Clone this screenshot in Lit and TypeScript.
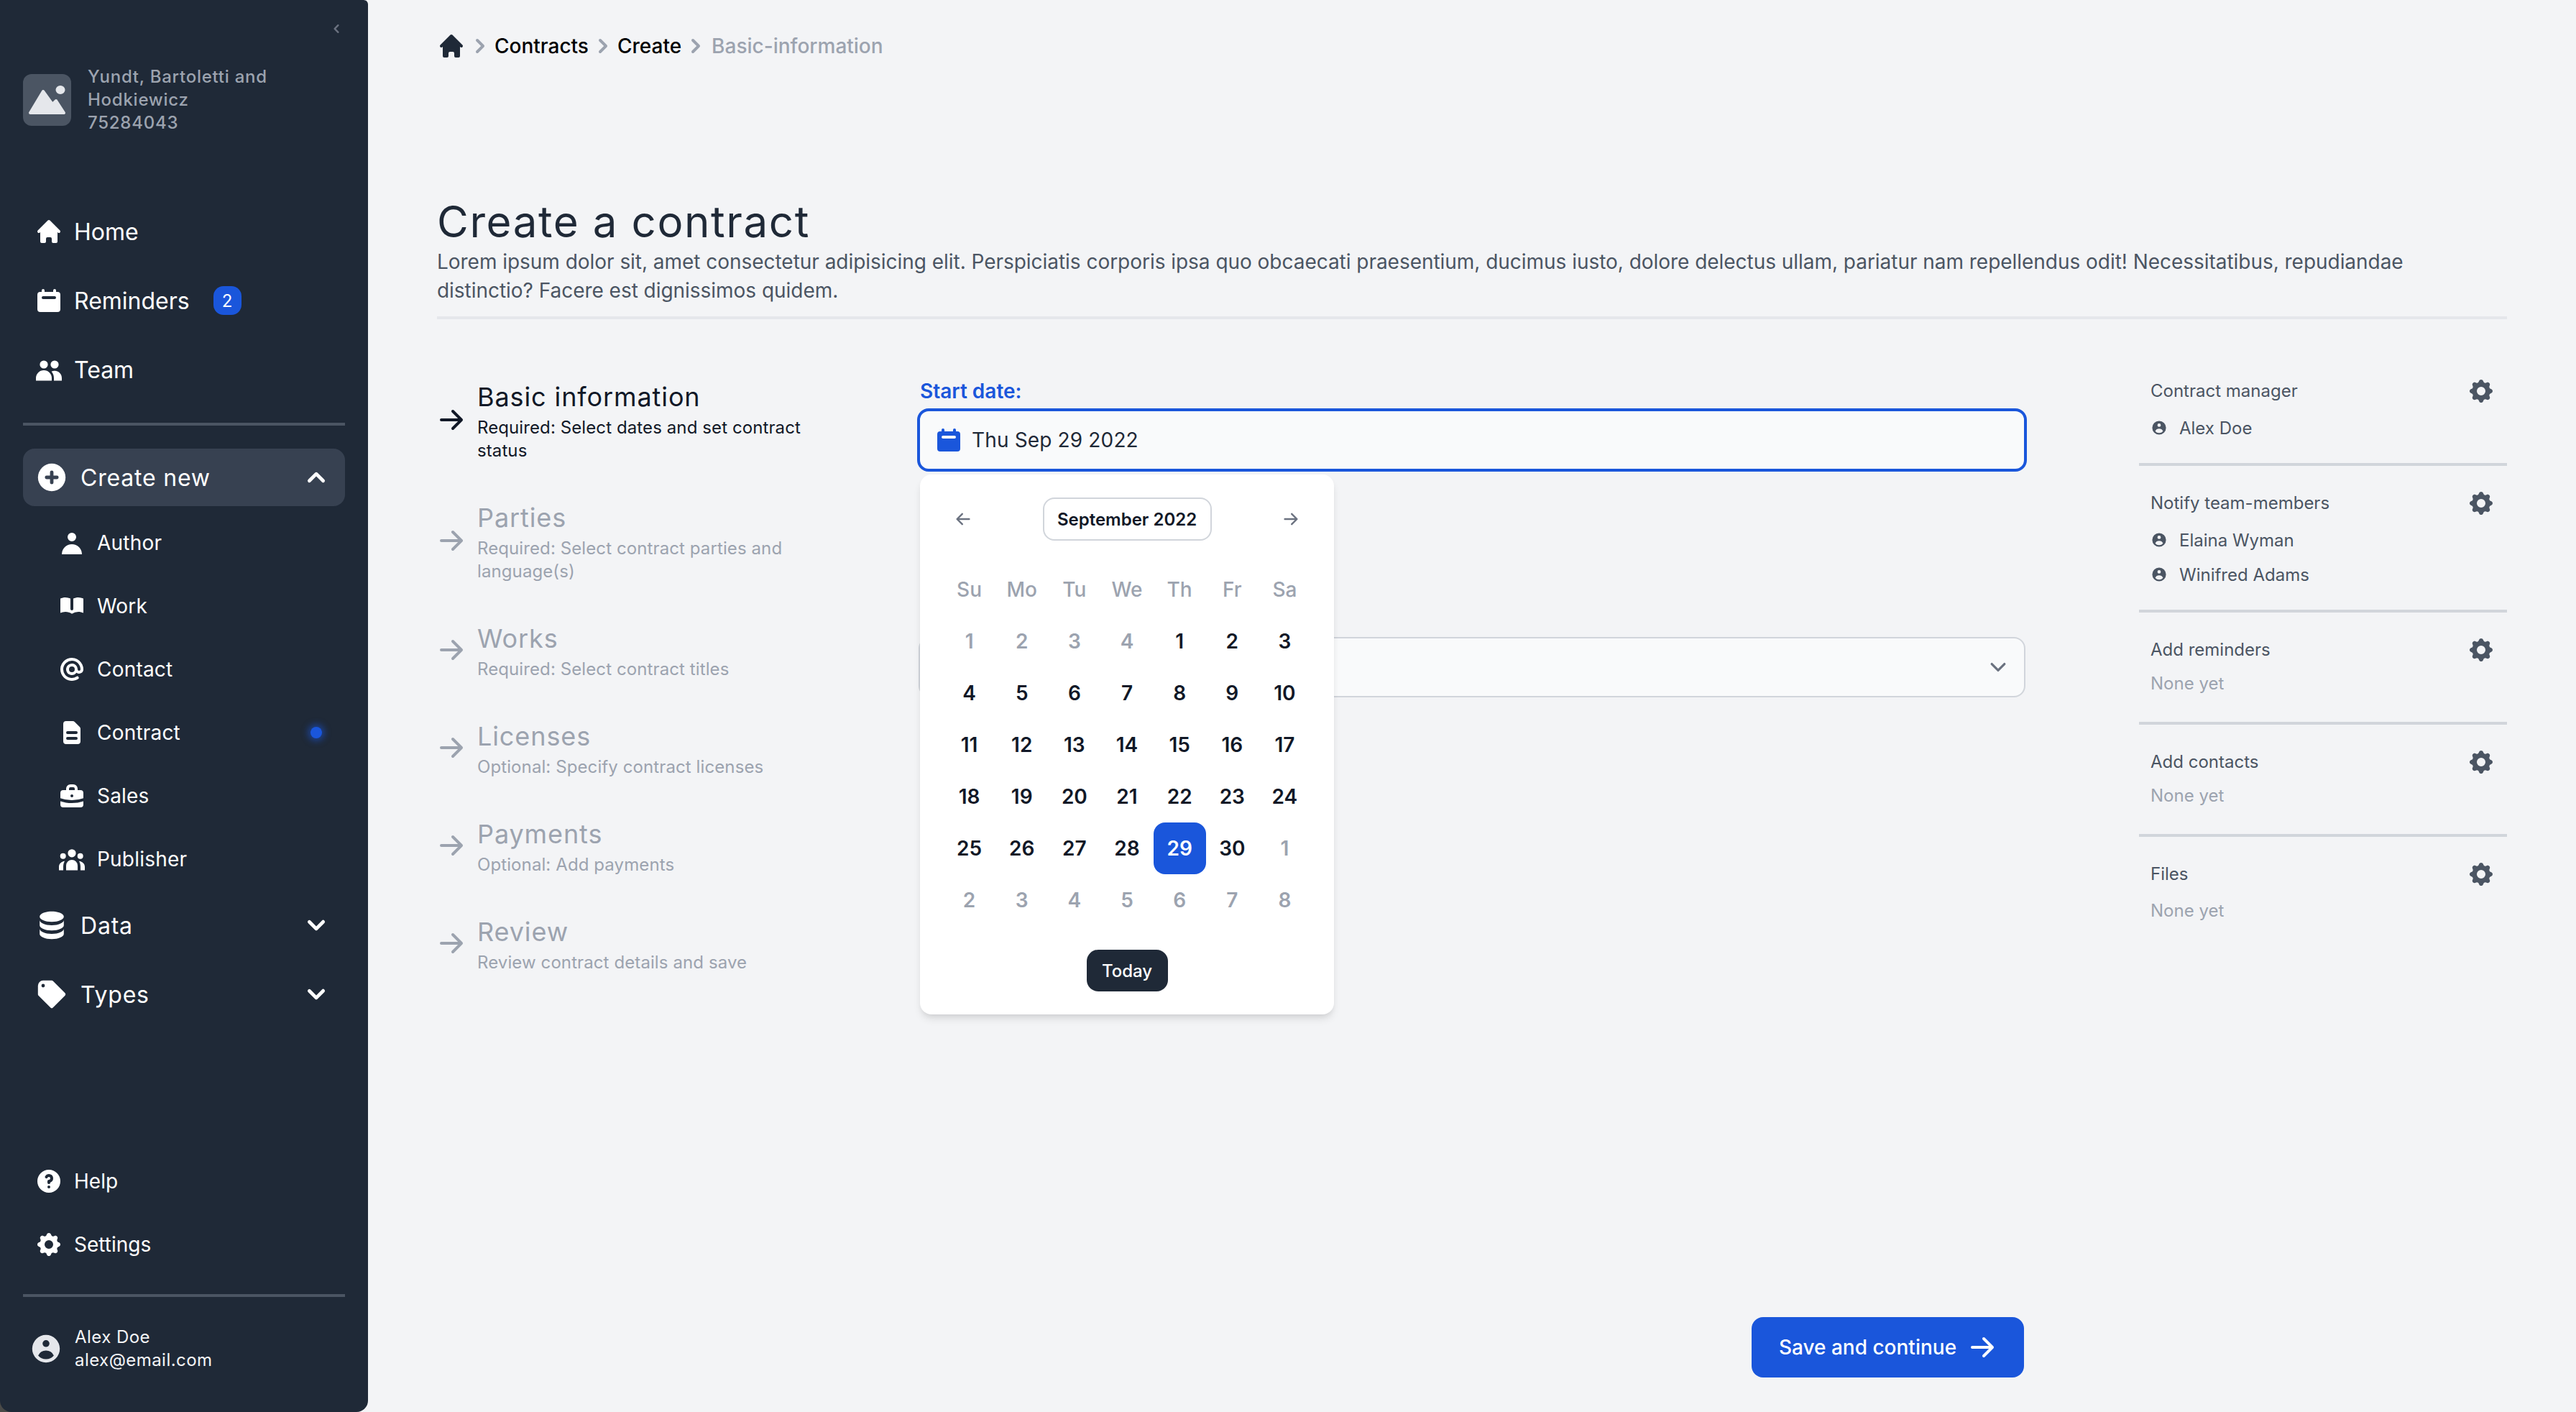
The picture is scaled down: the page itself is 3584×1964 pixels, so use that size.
import { LitElement, html, css, svg } from "lit";
import { customElement } from "lit/decorators.js";

const ICONS: Record<string, string> = {
  home: "M10.707 2.293a1 1 0 00-1.414 0l-7 7a1 1 0 001.414 1.414L4 10.414V17a1 1 0 001 1h2a1 1 0 001-1v-2a1 1 0 011-1h2a1 1 0 011 1v2a1 1 0 001 1h2a1 1 0 001-1v-6.586l.293.293a1 1 0 001.414-1.414l-7-7z",
  calendar: "M6 2a1 1 0 00-1 1v1H4a2 2 0 00-2 2v10a2 2 0 002 2h12a2 2 0 002-2V6a2 2 0 00-2-2h-1V3a1 1 0 10-2 0v1H7V3a1 1 0 00-1-1zm0 5a1 1 0 000 2h8a1 1 0 100-2H6z",
  users: "M6.5 3.7a2.8 2.8 0 100 5.6 2.8 2.8 0 000-5.6zM14 3.7a2.8 2.8 0 100 5.6 2.8 2.8 0 000-5.6zM1 17.8V16a5.5 5.5 0 0111 0v1.8zM13.5 17.8V16c0-1.8-.6-3.4-1.7-4.6A5 5 0 0119 16v1.8z",
  plus: "M10 18a8 8 0 100-16 8 8 0 000 16zm1-11a1 1 0 10-2 0v2H7a1 1 0 100 2h2v2a1 1 0 102 0v-2h2a1 1 0 100-2h-2V7z",
  user: "M10 9a3 3 0 100-6 3 3 0 000 6zm-7 9a7 7 0 1114 0H3z",
  book: "M9 4.804A7.968 7.968 0 005.5 4c-1.255 0-2.443.29-3.5.804v10A7.969 7.969 0 015.5 14c1.669 0 3.218.51 4.5 1.385A7.962 7.962 0 0114.5 14c1.255 0 2.443.29 3.5.804v-10A7.968 7.968 0 0014.5 4c-1.255 0-2.443.29-3.5.804V12a1 1 0 11-2 0V4.804z",
  at: "M14.243 5.757a6 6 0 10-.986 9.284 1 1 0 111.087 1.678A8 8 0 1118 10a3 3 0 01-4.8 2.401A4 4 0 1114 10a1 1 0 102 0c0-1.537-.586-3.07-1.757-4.243zM12 10a2 2 0 10-4 0 2 2 0 004 0z",
  doc: "M4 4a2 2 0 012-2h4.586A2 2 0 0112 2.586L15.414 6A2 2 0 0116 7.414V16a2 2 0 01-2 2H6a2 2 0 01-2-2V4zm2 6a1 1 0 011-1h6a1 1 0 110 2H7a1 1 0 01-1-1zm1 3a1 1 0 100 2h6a1 1 0 100-2H7z",
  briefcase: "M6 6V5a3 3 0 013-3h2a3 3 0 013 3v1h2a2 2 0 012 2v3.57A22.952 22.952 0 0110 13a22.95 22.95 0 01-8-1.43V8a2 2 0 012-2h2zm2-1a1 1 0 011-1h2a1 1 0 011 1v1H8V5zm1 5a1 1 0 011-1h.01a1 1 0 110 2H10a1 1 0 01-1-1zM2 13.692V16a2 2 0 002 2h12a2 2 0 002-2v-2.308A24.974 24.974 0 0110 15c-2.796 0-5.487-.46-8-1.308z",
  group: "M10 3.1a2.8 2.8 0 100 5.6 2.8 2.8 0 000-5.6zM3.85 5.85a2 2 0 100 4 2 2 0 000-4zM15.85 5.85a2 2 0 100 4 2 2 0 000-4zM6 17.8v-3.3a4 4 0 018 0v3.3zM1 17.8v-2.4c0-2.1 1.6-3.7 4-4-.6 1.1-1 2.4-1 3.9v2.5zM19 17.8v-2.4c0-2.1-1.6-3.7-4-4 .6 1.1 1 2.4 1 3.9v2.5z",
  database: "M3 12v3c0 1.657 3.134 3 7 3s7-1.343 7-3v-3c0 1.657-3.134 3-7 3s-7-1.343-7-3zM3 7v3c0 1.657 3.134 3 7 3s7-1.343 7-3V7c0 1.657-3.134 3-7 3S3 8.657 3 7zM17 5c0 1.657-3.134 3-7 3S3 6.657 3 5s3.134-3 7-3 7 1.343 7 3z",
  tag: "M17.707 9.293a1 1 0 010 1.414l-7 7a1 1 0 01-1.414 0l-7-7A.997.997 0 012 10V5a3 3 0 013-3h5c.256 0 .512.098.707.293l7 7zM5 6a1 1 0 100-2 1 1 0 000 2z",
  up: "M14.707 12.707a1 1 0 01-1.414 0L10 9.414l-3.293 3.293a1 1 0 01-1.414-1.414l4-4a1 1 0 011.414 0l4 4a1 1 0 010 1.414z",
  down: "M5.293 7.293a1 1 0 011.414 0L10 10.586l3.293-3.293a1 1 0 111.414 1.414l-4 4a1 1 0 01-1.414 0l-4-4a1 1 0 010-1.414z",
  left: "M12.707 5.293a1 1 0 010 1.414L9.414 10l3.293 3.293a1 1 0 01-1.414 1.414l-4-4a1 1 0 010-1.414l4-4a1 1 0 011.414 0z",
  right: "M7.293 14.707a1 1 0 010-1.414L10.586 10 7.293 6.707a1 1 0 011.414-1.414l4 4a1 1 0 010 1.414l-4 4a1 1 0 01-1.414 0z",
  help: "M18 10a8 8 0 11-16 0 8 8 0 0116 0zm-8-3a1 1 0 00-.867.5 1 1 0 11-1.731-1A3 3 0 0113 8a3.001 3.001 0 01-2 2.83V11a1 1 0 11-2 0v-1a1 1 0 011-1 1 1 0 100-2zm0 8a1 1 0 100-2 1 1 0 000 2z",
  cog: "M11.49 3.17c-.38-1.56-2.6-1.56-2.98 0a1.532 1.532 0 01-2.286.948c-1.372-.836-2.942.734-2.106 2.106.54.886.061 2.042-.947 2.287-1.561.379-1.561 2.6 0 2.978a1.532 1.532 0 01.947 2.287c-.836 1.372.734 2.942 2.106 2.106a1.532 1.532 0 012.287.947c.379 1.561 2.6 1.561 2.978 0a1.533 1.533 0 012.287-.947c1.372.836 2.942-.734 2.106-2.106a1.533 1.533 0 01.947-2.287c1.561-.379 1.561-2.6 0-2.978a1.532 1.532 0 01-.947-2.287c.836-1.372-.734-2.942-2.106-2.106a1.532 1.532 0 01-2.287-.947zM10 13a3 3 0 100-6 3 3 0 000 6z",
  avatar: "M18 10a8 8 0 11-16 0 8 8 0 0116 0zm-6-3a2 2 0 11-4 0 2 2 0 014 0zm-2 4a5 5 0 00-4.546 2.916A5.986 5.986 0 0010 16a5.986 5.986 0 004.546-2.084A5 5 0 0010 11z",
  arrow: "M10.293 3.293a1 1 0 011.414 0l6 6a1 1 0 010 1.414l-6 6a1 1 0 01-1.414-1.414L14.586 11H3a1 1 0 110-2h11.586l-4.293-4.293a1 1 0 010-1.414z",
  back: "M9.707 16.707a1 1 0 01-1.414 0l-6-6a1 1 0 010-1.414l6-6a1 1 0 011.414 1.414L5.414 9H17a1 1 0 110 2H5.414l4.293 4.293a1 1 0 010 1.414z",
};

const icon = (name: string, size = 40) => html`<svg class="icon" width=${size} height=${size} viewBox="0 0 20 20" fill="currentColor">${svg`<path fill-rule="evenodd" clip-rule="evenodd" d=${ICONS[name]}></path>`}</svg>`;

const STEPS = [
  { title: "Basic information", sub: "Required: Select dates and set contract status" },
  { title: "Parties", sub: "Required: Select contract parties and language(s)" },
  { title: "Works", sub: "Required: Select contract titles" },
  { title: "Licenses", sub: "Optional: Specify contract licenses" },
  { title: "Payments", sub: "Optional: Add payments" },
  { title: "Review", sub: "Review contract details and save" },
];

const SUBNAV = [
  ["user", "Author"],
  ["book", "Work"],
  ["at", "Contact"],
  ["doc", "Contract"],
  ["briefcase", "Sales"],
  ["group", "Publisher"],
];

const PANELS = [
  { title: "Contract manager", people: ["Alex Doe"] },
  { title: "Notify team-members", people: ["Elaina Wyman", "Winifred Adams"] },
  { title: "Add reminders", people: [] },
  { title: "Add contacts", people: [] },
  { title: "Files", people: [] },
];

const WEEKDAYS = ["Su", "Mo", "Tu", "We", "Th", "Fr", "Sa"];

// the picker in the shot numbers the four leading days 1-4
const DAYS: { n: number; muted?: boolean; on?: boolean }[] = [
  ...[1, 2, 3, 4].map((n) => ({ n, muted: true })),
  ...Array.from({ length: 30 }, (_, i) => ({ n: i + 1, on: i + 1 === 29 })),
  ...[1, 2, 3, 4, 5, 6, 7, 8].map((n) => ({ n, muted: true })),
];

@customElement("app-root")
export class AppRoot extends LitElement {
  static styles = css`
    :host {
      display: flex;
      height: 1964px;
      background: #f3f4f6;
      font-family: Inter, "Liberation Sans", sans-serif;
      color: #1f2937;
      overflow: hidden;
    }

    .icon {
      display: block;
      flex: none;
    }

    /* sidebar */
    .rail {
      flex: none;
      background: no-repeat left bottom / 16px 16px linear-gradient(#4a4a48, #4a4a48);
    }

    .sidebar {
      box-sizing: border-box;
      width: 512px;
      height: 1964px;
      padding: 28px 32px 56px;
      background: #1f2937;
      border-radius: 0 6px 16px 16px;
      display: flex;
      flex-direction: column;
      color: #fff;
    }

    .collapse {
      display: flex;
      justify-content: flex-end;
      height: 24px;
      color: #6b7280;
    }

    .org {
      display: flex;
      align-items: center;
      gap: 23px;
      margin-top: 39px;
      height: 96px;
    }

    .logo {
      display: block;
      flex: none;
      width: 67px;
      height: 72px;
    }

    .org-name {
      font-size: 24px;
      line-height: 32px;
      font-weight: 500;
      letter-spacing: 0.75px;
      color: #9ca3af;
      width: 300px;
    }

    .nav {
      margin-top: 87px;
    }

    .row {
      display: flex;
      align-items: center;
      gap: 15px;
      height: 96px;
      padding-left: 16px;
      font-size: 32px;
    }

    .badge {
      box-sizing: border-box;
      width: 39px;
      height: 40px;
      margin-left: 18px;
      border-radius: 14px;
      background: #1a56db;
      font-size: 24px;
      display: flex;
      align-items: center;
      justify-content: center;
    }

    .rule {
      height: 4px;
      background: #4b5563;
    }

    .nav-rule {
      margin-top: 26px;
    }

    .group-row {
      gap: 16px;
      letter-spacing: 0.8px;
      padding-right: 16px;
    }

    .group-row .chev {
      margin-left: auto;
    }

    .group-row.open {
      height: 80px;
      margin-top: 32px;
      margin-bottom: 7px;
      border-radius: 16px;
      background: #374151;
    }

    .sub {
      display: flex;
      align-items: center;
      gap: 15px;
      height: 88px;
      padding: 0 32px 0 48px;
      font-size: 28px;
      letter-spacing: 0.2px;
    }

    .sub-plain {
      padding-left: 16px;
      letter-spacing: 0;
    }

    .dot {
      margin-left: auto;
      width: 16px;
      height: 16px;
      border-radius: 50%;
      background: #1a56db;
      box-shadow: 0 0 8px 4px rgba(26, 86, 219, 0.5);
    }

    .bottom {
      margin-top: auto;
    }

    .bottom .rule {
      margin-top: 25px;
    }

    .me {
      display: flex;
      align-items: center;
      gap: 16px;
      height: 64px;
      margin-top: 40px;
      padding-left: 8px;
      font-size: 24px;
      line-height: 32px;
      letter-spacing: 0.45px;
      color: #f3f4f6;
    }

    .me .icon {
      color: #e5e7eb;
    }

    /* main */
    .main {
      box-sizing: border-box;
      flex: 1;
      min-width: 0;
      height: 1964px;
      padding: 44px 96px 0;
      display: flex;
      flex-direction: column;
    }

    .crumbs {
      display: flex;
      align-items: center;
      height: 40px;
      font-size: 28px;
      font-weight: 500;
      color: #000;
    }

    .crumbs .home {
      color: #1f2937;
    }

    .crumbs .sep,
    .crumbs .here {
      color: #9ca3af;
    }

    .crumbs .here {
      margin-left: 2px;
    }

    h1 {
      margin: 188px 0 0;
      font-size: 60px;
      line-height: 72px;
      font-weight: 400;
      letter-spacing: 1.6px;
    }

    .lead {
      margin: 0;
      max-width: 2800px;
      font-size: 28px;
      line-height: 40px;
      letter-spacing: -0.035px;
      color: #4b5563;
    }

    .head-rule {
      height: 4px;
      margin-top: 16px;
      background: #e5e7eb;
    }

    .cols {
      flex: 1;
      min-height: 0;
      display: flex;
    }

    /* steps */
    .steps {
      width: 670px;
      flex: none;
      padding-top: 84px;
      display: flex;
      flex-direction: column;
      gap: 53px;
    }

    .step {
      display: flex;
      align-items: center;
      gap: 16px;
      color: #9ca3af;
    }

    .step .icon {
      margin-bottom: 4px;
    }

    .step.current {
      color: #111827;
    }

    .step-title {
      font-size: 36px;
      line-height: 48px;
      letter-spacing: 0.9px;
    }

    .step-sub {
      width: 480px;
      margin-top: 3px;
      font-size: 24px;
      line-height: 32px;
      letter-spacing: 0.1px;
    }

    /* form */
    .form {
      box-sizing: border-box;
      width: 1540px;
      flex: none;
      padding: 80px 0 48px;
      display: flex;
      flex-direction: column;
    }

    .label {
      font-size: 28px;
      line-height: 40px;
      font-weight: 600;
      color: #1a56db;
      margin: 0 0 4px 2px;
    }

    .field {
      position: relative;
    }

    .date-input {
      box-sizing: border-box;
      height: 88px;
      margin: 0 -2px;
      padding-left: 20px;
      display: flex;
      align-items: center;
      gap: 12px;
      border: 4px solid #1a56db;
      border-radius: 16px;
      background: #f9fafb;
      font-size: 28px;
      letter-spacing: 0.15px;
      color: #1f2937;
    }

    .date-input .icon {
      color: #1a56db;
    }

    .select {
      box-sizing: border-box;
      height: 84px;
      margin-top: 230px;
      padding-right: 14px;
      display: flex;
      align-items: center;
      justify-content: flex-end;
      border: 2px solid #d1d5db;
      border-radius: 16px;
      background: #f9fafb;
      color: #6b7280;
    }

    .picker {
      position: absolute;
      left: 2px;
      top: 92px;
      box-sizing: border-box;
      width: 576px;
      padding: 32px;
      border-radius: 16px;
      background: #fff;
      box-shadow: 0 8px 12px -2px rgba(0, 0, 0, 0.1), 0 4px 8px -4px rgba(0, 0, 0, 0.1);
    }

    .picker-head {
      display: flex;
      align-items: center;
      justify-content: space-between;
      color: #6b7280;
    }

    .picker-nav {
      padding: 0 16px;
    }

    .month {
      box-sizing: border-box;
      width: 235px;
      height: 60px;
      display: flex;
      align-items: center;
      justify-content: center;
      border: 2px solid #d1d5db;
      border-radius: 16px;
      font-size: 24px;
      font-weight: 600;
      color: #111827;
    }

    .weekdays,
    .days {
      display: grid;
      grid-template-columns: repeat(7, 1fr);
      text-align: center;
    }

    .weekdays {
      margin-top: 44px;
      font-size: 28px;
      line-height: 48px;
      font-weight: 500;
      color: #9ca3af;
    }

    .days {
      margin-top: 12px;
      font-size: 28px;
      line-height: 72px;
      font-weight: 600;
      color: #111827;
    }

    .day {
      height: 72px;
      border-radius: 16px;
    }

    .day.muted {
      color: #9ca3af;
    }

    .day.on {
      background: #1a56db;
      color: #fff;
    }

    .today {
      box-sizing: border-box;
      width: 113px;
      height: 58px;
      margin: 33px auto 0;
      display: flex;
      align-items: center;
      justify-content: center;
      border-radius: 16px;
      background: #1f2937;
      color: #fff;
      font-size: 24px;
      font-weight: 500;
    }

    .save {
      box-sizing: border-box;
      align-self: flex-end;
      width: 379px;
      height: 84px;
      margin: auto 2px 0 0;
      display: flex;
      align-items: center;
      justify-content: center;
      gap: 16px;
      border-radius: 16px;
      background: #1a56db;
      color: #fff;
      font-size: 28px;
      font-weight: 500;
    }

    /* right panels */
    .panels {
      width: 512px;
      flex: none;
      margin-left: auto;
      padding-top: 48px;
    }

    .panel {
      padding: 31px 16px 25px;
      border-bottom: 4px solid #d1d5db;
      font-size: 24px;
      color: #4b5563;
    }

    .panel:last-child {
      border-bottom: none;
    }

    .panel-head {
      display: flex;
      align-items: center;
      justify-content: space-between;
      height: 40px;
      margin-bottom: 8px;
    }

    .panel-head .icon {
      margin-top: 2px;
    }

    .person {
      display: flex;
      align-items: center;
      gap: 16px;
      height: 48px;
    }

    .none {
      height: 48px;
      line-height: 48px;
      color: #9ca3af;
      transform: translateY(-4px);
    }

    .panel:last-child .none {
      transform: none;
    }
  `;

  private renderSidebar() {
    return html`
      <div class="rail">
        <aside class="sidebar">
          <div class="collapse">${icon("left", 24)}</div>
          <div class="org">
            <svg class="logo" viewBox="0 0 67 72">
              <rect width="67" height="72" rx="12" fill="#4b5563"></rect>
              <ellipse cx="52" cy="22" rx="6.5" ry="6" fill="#e5e7eb"></ellipse>
              <path d="M10 54 L28 24 L41 42 L46 37 L57 54 Z" fill="#e5e7eb" stroke="#e5e7eb" stroke-width="4" stroke-linejoin="round"></path>
            </svg>
            <div class="org-name">Yundt, Bartoletti and Hodkiewicz<br />75284043</div>
          </div>

          <div class="nav">
            <div class="row">${icon("home")}<span>Home</span></div>
            <div class="row">${icon("calendar")}<span>Reminders</span><span class="badge">2</span></div>
            <div class="row">${icon("users")}<span>Team</span></div>
          </div>
          <div class="rule nav-rule"></div>

          <div class="row group-row open">${icon("plus", 48)}<span>Create new</span><span class="chev">${icon("up", 48)}</span></div>
          ${SUBNAV.map(
            ([name, label]) => html`<div class="sub">${icon(name)}<span>${label}</span>${label === "Contract" ? html`<span class="dot"></span>` : null}</div>`,
          )}
          <div class="row group-row">${icon("database", 48)}<span>Data</span><span class="chev">${icon("down", 48)}</span></div>
          <div class="row group-row">${icon("tag", 48)}<span>Types</span><span class="chev">${icon("down", 48)}</span></div>

          <div class="bottom">
            <div class="sub sub-plain">${icon("help")}<span>Help</span></div>
            <div class="sub sub-plain">${icon("cog")}<span>Settings</span></div>
            <div class="rule"></div>
            <div class="me">${icon("avatar", 48)}<div>Alex Doe<br />alex@email.com</div></div>
          </div>
        </aside>
      </div>
    `;
  }

  private renderPicker() {
    return html`
      <div class="picker">
        <div class="picker-head">
          <span class="picker-nav">${icon("back", 24)}</span>
          <span class="month">September 2022</span>
          <span class="picker-nav">${icon("arrow", 24)}</span>
        </div>
        <div class="weekdays">${WEEKDAYS.map((d) => html`<span>${d}</span>`)}</div>
        <div class="days">
          ${DAYS.map((d) => html`<span class="day ${d.muted ? "muted" : ""} ${d.on ? "on" : ""}">${d.n}</span>`)}
        </div>
        <div class="today">Today</div>
      </div>
    `;
  }

  render() {
    return html`
      ${this.renderSidebar()}
      <main class="main">
        <nav class="crumbs">
          <span class="home">${icon("home")}</span>
          <span class="sep">${icon("right")}</span><span>Contracts</span>
          <span class="sep">${icon("right")}</span><span>Create</span>
          <span class="sep">${icon("right")}</span><span class="here">Basic-information</span>
        </nav>
        <h1>Create a contract</h1>
        <p class="lead">
          Lorem ipsum dolor sit, amet consectetur adipisicing elit. Perspiciatis corporis ipsa quo obcaecati praesentium, ducimus iusto, dolore delectus ullam, pariatur nam repellendus odit! Necessitatibus, repudiandae distinctio? Facere est dignissimos quidem.
        </p>
        <div class="head-rule"></div>

        <div class="cols">
          <div class="steps">
            ${STEPS.map(
              (s, i) => html`
                <div class="step ${i === 0 ? "current" : ""}">
                  ${icon("arrow")}
                  <div>
                    <div class="step-title">${s.title}</div>
                    <div class="step-sub">${s.sub}</div>
                  </div>
                </div>
              `,
            )}
          </div>

          <div class="form">
            <div class="label">Start date:</div>
            <div class="field">
              <div class="date-input">${icon("calendar")}<span>Thu Sep 29 2022</span></div>
              ${this.renderPicker()}
            </div>
            <div class="select">
              <svg class="icon" width="44" height="44" viewBox="0 0 20 20" fill="none" stroke="currentColor" stroke-width="1.5" stroke-linecap="round" stroke-linejoin="round"><path d="m6 8 4 4 4-4"></path></svg>
            </div>
            <div class="save"><span>Save and continue</span>${icon("arrow")}</div>
          </div>

          <div class="panels">
            ${PANELS.map(
              (p) => html`
                <section class="panel">
                  <div class="panel-head"><span>${p.title}</span>${icon("cog")}</div>
                  ${p.people.length
                    ? p.people.map((name) => html`<div class="person">${icon("avatar", 24)}<span>${name}</span></div>`)
                    : html`<div class="none">None yet</div>`}
                </section>
              `,
            )}
          </div>
        </div>
      </main>
    `;
  }
}
